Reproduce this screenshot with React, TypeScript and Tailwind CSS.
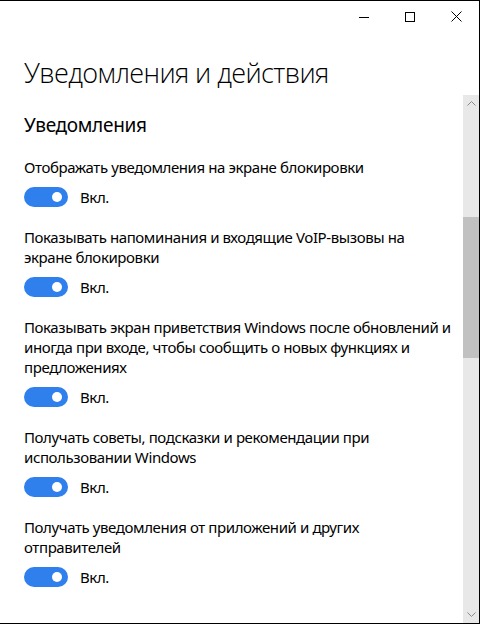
const items = [
    ['Отображать уведомления на экране блокировки'],
    ['Показывать напоминания и входящие VoIP-вызовы на', 'экране блокировки'],
    ['Показывать экран приветствия Windows после обновлений и', 'иногда при входе, чтобы сообщить о новых функциях и', 'предложениях'],
    ['Получать советы, подсказки и рекомендации при', 'использовании Windows'],
    ['Получать уведомления от приложений и других', 'отправителей'],
];

function Toggle() {
    return (
        <div className="flex items-center h-5 gap-3">
            <div className="w-11 h-5 rounded-full bg-[#2f80ed] flex items-center justify-end pr-[6px]">
                <div className="w-[10px] h-[10px] rounded-full bg-white" />
            </div>
            <span className="text-[15px] leading-5 tracking-[-0.4px]">Вкл.</span>
        </div>
    );
}

export default function App() {
    return (
        <div className="w-[481px] h-[625px] bg-white" style={{ fontFamily: '"Noto Sans", "Open Sans", sans-serif' }}>
            <div className="w-[480px] h-[624px] border-t border-r border-b border-black flex flex-col text-black">
                {/* title bar */}
                <div className="h-[31px] flex justify-end shrink-0">
                    <button className="w-[46px] h-full flex items-center justify-center">
                        <svg width="10" height="10" viewBox="0 0 10 10">
                            <path d="M0 5.5h10" stroke="#000" strokeWidth="1" />
                        </svg>
                    </button>
                    <button className="w-[46px] h-full flex items-center justify-center">
                        <svg width="10" height="10" viewBox="0 0 10 10">
                            <rect x="0.5" y="0.5" width="9" height="9" fill="none" stroke="#000" strokeWidth="1" />
                        </svg>
                    </button>
                    <button className="w-[46px] h-full flex items-center justify-center">
                        <svg width="11" height="11" viewBox="0 0 11 11">
                            <path d="M0.5 0.5l10 10M10.5 0.5l-10 10" stroke="#000" strokeWidth="1" />
                        </svg>
                    </button>
                </div>

                <h1 className="px-6 pt-[23px] text-[27px] leading-9 font-light tracking-[-0.6px] h-[63px] shrink-0 font-['Open_Sans',sans-serif]">
                    Уведомления и действия
                </h1>

                <div className="flex flex-1 min-h-0">
                    <div className="flex-1 pl-6 pt-4 overflow-hidden">
                        <h2 className="text-[19px] leading-7 mb-[18px] tracking-[-0.3px]">Уведомления</h2>
                        <div className="flex flex-col gap-5">
                            {items.map((lines, i) => (
                                <div key={i} className="flex flex-col gap-[10px]">
                                    <p className="text-[15px] leading-5 tracking-[-0.4px]">
                                        {lines.map((l, j) => (
                                            <span key={j} className="block whitespace-nowrap">{l}</span>
                                        ))}
                                    </p>
                                    <Toggle />
                                </div>
                            ))}
                        </div>
                    </div>

                    {/* scrollbar */}
                    <div className="w-4 shrink-0 bg-[#e8e8e8] flex flex-col items-center">
                        <div className="h-[17px] flex items-center justify-center">
                            <svg width="9" height="5" viewBox="0 0 9 5">
                                <path d="M0.5 4.5l4-4 4 4" fill="none" stroke="#8a8a8a" strokeWidth="1" />
                            </svg>
                        </div>
                        <div className="h-[105px]" />
                        <div className="w-full h-[141px] bg-[#c1c1c1]" />
                        <div className="flex-1" />
                        <div className="h-[17px] flex items-center justify-center">
                            <svg width="9" height="5" viewBox="0 0 9 5">
                                <path d="M0.5 0.5l4 4 4-4" fill="none" stroke="#8a8a8a" strokeWidth="1" />
                            </svg>
                        </div>
                    </div>
                </div>
            </div>
        </div>
    );
}
